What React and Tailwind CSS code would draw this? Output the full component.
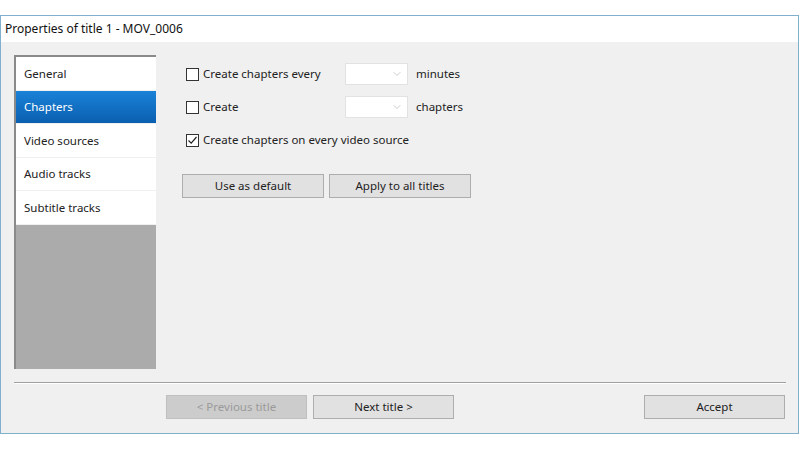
import { ChevronDown } from "lucide-react";

const font = { fontFamily: '"Noto Sans", "Open Sans", sans-serif' };

function Check({ checked, label }) {
  return (
    <div className="flex items-center h-[22px]">
      <span className="w-[13px] h-[13px] border border-[#333] bg-white flex items-center justify-center">
        {checked && (
          <svg width="11" height="11" viewBox="0 0 11 11">
            <path d="M1.5 5.5 L4.2 8.2 L9.5 2" fill="none" stroke="#222" strokeWidth="1.2" />
          </svg>
        )}
      </span>
      <span className="ml-[4px] text-[11.5px] text-[#222]">{label}</span>
    </div>
  );
}

function Select() {
  return (
    <div className="w-[63px] h-[22px] bg-white border border-[#e2e2e2] flex items-center justify-end pr-[4px]">
      <ChevronDown size={12} strokeWidth={1} color="#999" />
    </div>
  );
}

function Btn({ children, disabled, className = "" }) {
  return (
    <button
      className={`h-[24px] border text-[11.5px] ${
        disabled ? "bg-[#cccccc] text-[#9a9a9a] border-[#bfbfbf]" : "bg-[#e1e1e1] text-[#222] border-[#adadad]"
      } ${className}`}
    >
      {children}
    </button>
  );
}

export default function App() {
  const items = ["General", "Chapters", "Video sources", "Audio tracks", "Subtitle tracks"];
  return (
    <div className="w-[800px] h-[450px] bg-white pt-[15px]" style={font}>
      <div className="w-[799px] h-[419px] border border-[#7fb0cc] flex flex-col">
        {/* title bar */}
        <div className="h-[26px] bg-white flex items-center pl-[4px] text-[12px] text-[#111]">
          Properties of title 1 - MOV_0006
        </div>
        <div className="flex-1 bg-[#f0f0f0] px-[13px] pt-[13px]">
          <div className="flex">
            {/* sidebar */}
            <div className="w-[142px] h-[314px] border-t-2 border-l-2 border-[#8a8a8a] flex flex-col bg-[#ababab]">
              {items.map((it) => (
                <div
                  key={it}
                  className={`h-[33.6px] flex items-center pl-[8px] text-[11.5px] border-b border-[#f0f0f0] ${
                    it === "Chapters"
                      ? "bg-gradient-to-b from-[#1a82d8] to-[#0a5fb0] text-white"
                      : "bg-white text-[#222]"
                  }`}
                >
                  {it}
                </div>
              ))}
            </div>
            {/* content */}
            <div className="ml-[30px] pt-[8px]">
              <div className="flex items-center">
                <div className="w-[159px]">
                  <Check label="Create chapters every" />
                </div>
                <Select />
                <span className="ml-[8px] text-[11.5px] text-[#222]">minutes</span>
              </div>
              <div className="flex items-center mt-[11px]">
                <div className="w-[159px]">
                  <Check label="Create" />
                </div>
                <Select />
                <span className="ml-[8px] text-[11.5px] text-[#222]">chapters</span>
              </div>
              <div className="mt-[11px]">
                <Check checked label="Create chapters on every video source" />
              </div>
              <div className="flex gap-[5px] mt-[23px] -ml-[4px]">
                <Btn className="w-[142px]">Use as default</Btn>
                <Btn className="w-[142px]">Apply to all titles</Btn>
              </div>
            </div>
          </div>
          <div className="mt-[13px] h-[2px] border-t border-[#a0a0a0] bg-white w-[772px]" />
          <div className="flex mt-[11px]">
            <Btn disabled className="ml-[152px] w-[141px]">&lt; Previous title</Btn>
            <Btn className="ml-[6px] w-[141px]">Next title &gt;</Btn>
            <Btn className="ml-[190px] w-[141px]">Accept</Btn>
          </div>
        </div>
      </div>
    </div>
  );
}
